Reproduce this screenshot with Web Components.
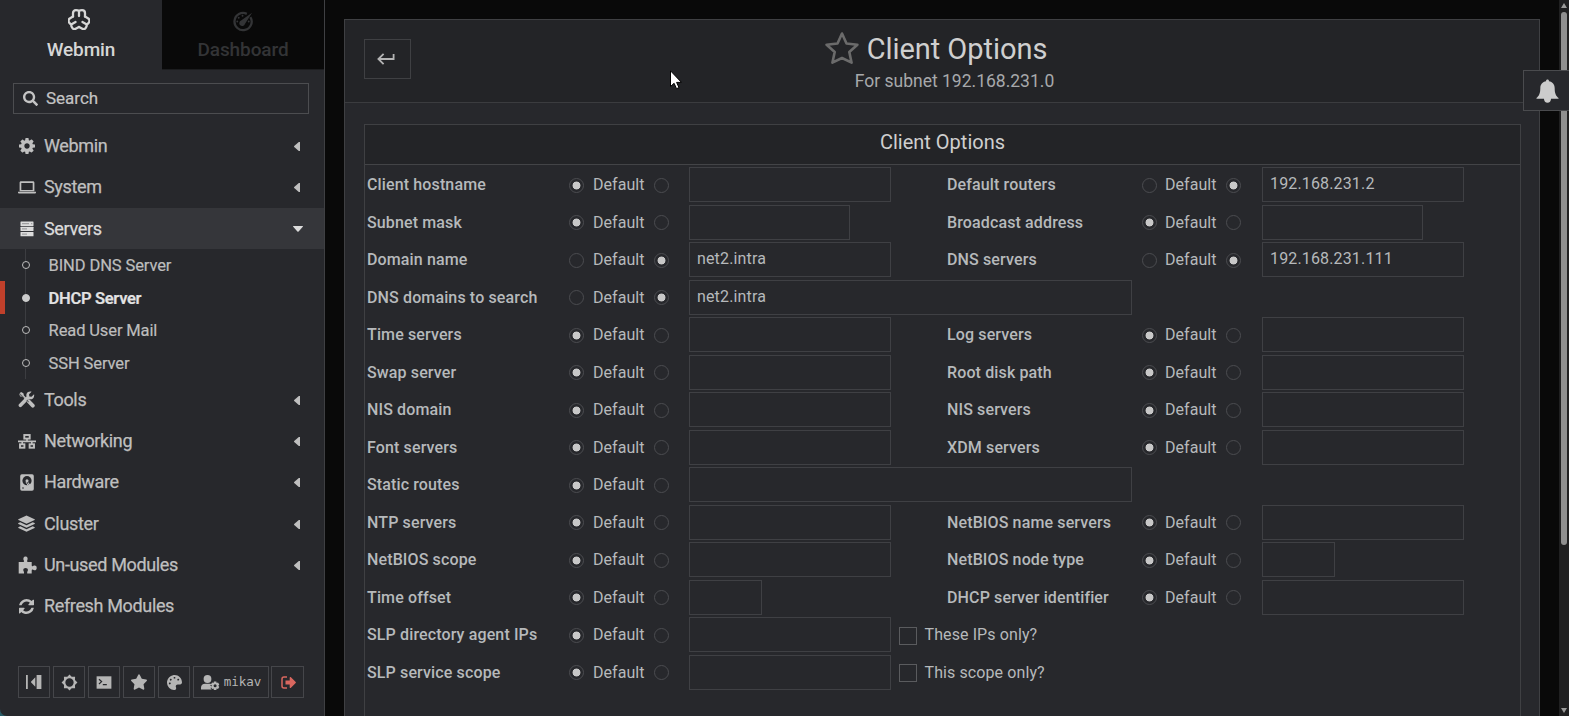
<!DOCTYPE html>
<html lang="en">
<head>
<meta charset="utf-8">
<title>Webmin - DHCP Server - Client Options</title>
<style>
html,body{margin:0;height:100%;overflow:hidden;background:#090909}
</style>
</head>
<body>
<wm-app></wm-app>
<script>
const define = (name, css, html) => customElements.define(name, class extends HTMLElement {
  constructor() {
    super();
    this.attachShadow({ mode: 'open' }).innerHTML =
      `<style>*{box-sizing:border-box}${css}</style>` + (typeof html === 'function' ? html(this) : html);
  }
});

const LOBE = 'M5 7.500V4.200q0-3 3-3 1.800 0 3 .8 1.200-.8 3-.8 3 0 3 3V7.500M11 2.500v4.500';
const ICONS = {
  webmin: ['0 0 22 21', `<g fill="none" stroke="currentColor" stroke-width="2.300" stroke-linejoin="round" stroke-linecap="round"><path d="${LOBE}"/><path transform="rotate(120 11 11)" d="${LOBE}"/><path transform="rotate(240 11 11)" d="${LOBE}"/></g>`],
  dash: ['0 0 22 22', '<path fill="none" stroke="currentColor" stroke-width="2.400" d="M18.700 6.300A9 9 0 1 1 15 3"/><path fill="currentColor" d="M20.500 1.800L13 13.500a3 3 0 1 1-4-3.500z"/><g fill="currentColor"><circle cx="5" cy="11" r="1"/><circle cx="6.500" cy="7" r="1"/><circle cx="10.500" cy="5" r="1"/><circle cx="17" cy="11" r="1"/></g>'],
  search: ['0 0 512 512', '<path fill="currentColor" d="M505 442.700L405.300 343c-4.500-4.500-10.600-7-17-7H372c27.600-35.300 44-79.700 44-128C416 93.100 322.900 0 208 0S0 93.100 0 208s93.100 208 208 208c48.300 0 92.700-16.400 128-44v16.300c0 6.400 2.500 12.500 7 17l99.700 99.700c9.400 9.400 24.600 9.400 33.900 0l28.300-28.300c9.400-9.400 9.400-24.600.1-34zM208 336c-70.700 0-128-57.200-128-128 0-70.700 57.200-128 128-128 70.700 0 128 57.200 128 128 0 70.700-57.200 128-128 128z"/>'],
  cog: ['128 128 1536 1536', '<path fill="currentColor" d="M1152 896q0-106-75-181t-181-75-181 75-75 181 75 181 181 75 181-75 75-181zm512-109v222q0 12-8 23t-20 13l-185 28q-19 54-39 91 35 50 107 138 10 12 10 25t-9 23q-27 37-99 108t-94 71q-12 0-26-9l-138-108q-44 23-91 38-16 136-29 186-7 28-36 28h-222q-14 0-24.500-8.500t-11.500-21.500l-28-184q-49-16-90-37l-141 107q-10 9-25 9-14 0-25-11-126-114-165-168-7-10-7-23 0-12 8-23 15-21 51-66.500t54-70.500q-27-50-41-99l-183-27q-13-2-21-12.500t-8-23.500v-222q0-12 8-23t19-13l186-28q14-46 39-92-40-57-107-138-10-12-10-24 0-10 9-23 26-36 98.500-107.500t94.500-71.500q13 0 26 10l138 107q44-23 91-38 16-136 29-186 7-28 36-28h222q14 0 24.500 8.500t11.500 21.500l28 184q49 16 90 37l142-107q9-9 24-9 13 0 25 10 129 119 165 170 7 8 7 22 0 12-8 23-15 21-51 66.500t-54 70.500q26 50 41 98l183 28q13 2 21 12.500t8 23.500z"/>'],
  laptop: ['0 0 18 13', '<path fill="currentColor" fill-rule="evenodd" d="M3 .3h12c.8 0 1.400.6 1.400 1.400v8.600H1.600V1.700C1.600.9 2.200.3 3 .3zm.3 1.700v7h11.400V2zM0 10.800h18v.6c0 .7-.6 1.200-1.300 1.200H1.300C.6 12.600 0 12.100 0 11.400z"/>'],
  server: ['0 0 14 16', '<g fill="currentColor"><rect x=".5" y=".5" width="13" height="4.400" rx=".5"/><rect x=".5" y="5.700" width="13" height="4.400" rx=".5"/><rect x=".5" y="10.900" width="13" height="4.400" rx=".5"/></g><path stroke="#35363a" stroke-width="1" opacity=".45" d="M2 2.700h7M2 7.900h5M2 13.100h5M11 2.700h1.300"/>'],
  tools: ['0 0 18 18', '<path fill="currentColor" d="M1 3.200L3.200 1l2.500 1.500.6 2.300 1.900 1.900-1.500 1.500-1.900-1.900-2.300-.6zM10.300 9.300l1.900-.3 4.900 5a2 2 0 0 1-2.900 2.900L9.500 12l.3-2zM17 3.400l-2.700 2.700-2.300-.4-.3-2.200L14.400.8c-2-.7-4.500 0-5.300 2.200-.4 1-.3 1.900-.1 2.700L1 14c-1.400 1.500.9 4.200 2.700 2.600l8-8c2.700.9 6.200-1.200 5.300-5.200z"/><path d="M2.300 1L0 0l1 2.300L6.400 7.700M9.300 9.700l2 2" stroke="#27282c" stroke-width="1.200" fill="none" opacity=".6"/>'],
  net: ['0 0 18 15', '<g fill="none" stroke="currentColor" stroke-width="1.900"><rect x="6.300" y="1" width="5.400" height="3.600"/><rect x="2" y="10.300" width="4.400" height="3.400"/><rect x="11.600" y="10.300" width="4.400" height="3.400"/></g><path stroke="currentColor" stroke-width="1.600" d="M0 7.400h18M9 5v2.400M4.200 7.400v3M13.800 7.400v3" fill="none"/>'],
  hdd: ['0 0 14 17', '<rect x=".2" y=".2" width="13.600" height="16.600" rx="1.700" fill="currentColor"/><circle cx="7" cy="6.700" r="4.600" fill="#27282c"/><circle cx="7" cy="6.700" r="1.500" fill="currentColor"/><path d="M7.200 7l1.900 5.600 1.700-1z" fill="currentColor"/><path d="M6 8l3 5" stroke="currentColor"/><circle cx="3" cy="14" r=".8" fill="#27282c"/>'],
  layers: ['0 0 18 18', '<g fill="currentColor"><path d="M9 .4l8.600 4q.5.400 0 .8L9 9.200l-8.600-4q-.5-.4 0-.8z"/><path d="M.4 8.600l2-.9L9 10.900l6.600-3.200 2 .9q.5.400 0 .8L9 13.400.4 9.400q-.5-.4 0-.8z"/><path d="M.4 12.900l2-.9L9 15.200l6.600-3.200 2 .9q.5.400 0 .8L9 17.700.4 13.700q-.5-.4 0-.8z"/></g>'],
  puzzle: ['0 0 19 18', '<path fill="currentColor" d="M.7 6h4.600c1 0 .9-.8.500-1.500C5 3 5.400.6 7.500.6s2.600 2.200 1.800 3.700C8.900 5.200 9 6 10 6h3.700v3.200c0 1 .7 1.200 1.400.8 1.700-1.100 3.600-.3 3.600 1.900s-2 3-3.600 1.900c-.7-.5-1.400-.2-1.400.8V17.400H9.200v-1.200c0-.7.700-1.100.7-2.200 0-1.200-1-1.900-2.300-1.900s-2.300.7-2.300 1.900c0 1.100.7 1.500.7 2.200v1.200H.7z"/>'],
  refresh: ['128 128 1536 1536', '<path fill="currentColor" d="M1639 1056q0 5-1 7-64 268-268 434.500t-478 166.500q-146 0-282.500-55t-243.500-157l-129 129q-19 19-45 19t-45-19-19-45v-448q0-26 19-45t45-19h448q26 0 45 19t19 45-19 45l-137 137q71 66 161 102t187 36q134 0 250-65t186-179q11-17 53-117 8-23 30-23h192q13 0 22.500 9.500t9.500 22.500zm25-800v448q0 26-19 45t-45 19h-448q-26 0-45-19t-19-45 19-45l138-138q-148-137-349-137-134 0-250 65t-186 179q-11 17-53 117-8 23-30 23h-199q-13 0-22.500-9.500t-9.500-22.500v-7q65-268 270-434.500t480-166.500q146 0 284 55.500t245 156.500l130-129q19-19 45-19t45 19 19 45z"/>'],
  left: ['0 0 6 9', '<path fill="currentColor" d="M6 0v9L4.800 9 .2 5q-.4-.5 0-1L4.800 0z"/>'],
  down: ['0 0 10 6', '<path fill="currentColor" d="M.4 0h9.200q.6.200.2.800L5.600 5.400q-.6.500-1.200 0L.2.800Q-.2.200.4 0z"/>'],
  collapse: ['0 0 16 14', '<path fill="currentColor" d="M0 0h1.800v14H0zM10.600 0h4.800v14h-4.800zM9.300 2.300v9.400L5.200 7.600q-.6-.6 0-1.200z"/>'],
  sun: ['0 0 18 18', '<path fill="currentColor" fill-rule="evenodd" d="M9 .4l2.300 2.500 3.600-.1-.1 3.600L17.400 9l-2.600 2.600.1 3.600-3.600-.1L9 17.600l-2.300-2.500-3.600.1.100-3.600L.6 9l2.600-2.600-.1-3.600 3.600.1zM9 4.600a4.400 4.400 0 1 0 0 8.800 4.400 4.400 0 0 0 0-8.800z"/>'],
  term: ['0 0 16 13', '<path fill="currentColor" d="M.6.300h14.800v12.400H.6z"/><path d="M3 3.200l2.600 2.400L3 8M6.800 8.600h4" stroke="#27282c" stroke-width="1.200" fill="none"/>'],
  star: ['20 0 536 512', '<path fill="currentColor" d="M259.300 17.800L194 150.200 47.900 171.500c-26.200 3.800-36.700 36.100-17.700 54.600l105.700 103-25 145.500c-4.500 26.300 23.200 46 46.400 33.700L288 439.600l130.700 68.700c23.200 12.200 50.900-7.400 46.400-33.700l-25-145.500 105.700-103c19-18.500 8.500-50.800-17.700-54.600L382 150.200 316.700 17.800c-11.700-23.600-45.600-23.900-57.400 0z"/>'],
  palette: ['0 0 512 512', '<path fill="currentColor" d="M204.300 5C104.900 24.400 24.800 104.300 5.200 203.400c-37 187 131.700 326.400 258.800 306.700 41.200-6.400 61.400-54.600 42.500-91.700-23.100-45.400 9.900-98.400 60.900-98.400h79.700c35.800 0 64.800-29.600 64.900-65.300C511.500 97.100 368.100-26.900 204.300 5zM96 320c-17.700 0-32-14.300-32-32s14.300-32 32-32 32 14.300 32 32-14.300 32-32 32zm32-128c-17.700 0-32-14.300-32-32s14.300-32 32-32 32 14.300 32 32-14.300 32-32 32zm128-64c-17.700 0-32-14.300-32-32s14.300-32 32-32 32 14.300 32 32-14.300 32-32 32zm128 64c-17.700 0-32-14.300-32-32s14.300-32 32-32 32 14.300 32 32-14.300 32-32 32z"/>'],
  user: ['0 0 19 15', '<g fill="currentColor"><circle cx="6.500" cy="4" r="3.900"/><path d="M0 14.500v-1.800C0 10.400 1.800 8.800 4 8.800h5l1.300.3-1 1.300 1 1.200-.7 1.700 1 1.200zM12.900 6.500h2.400l.4 1.500 1.300-.4 1.300 2-1 1.200 1 1.200-1.300 2-1.300-.4-.4 1.300h-2.400l-.4-1.300-1.400.4-1.200-2 1-1.200-1-1.200 1.200-2 1.400.4z"/></g><circle cx="14.100" cy="10.800" r="1.500" fill="#27282c"/>'],
  logout: ['0 0 16 13', '<path fill="none" stroke="currentColor" stroke-width="1.500" d="M6 1H3Q1 1 1 3v7q0 2 2 2h3"/><path fill="currentColor" d="M4.500 4.500h4.200v-3q.3-.8 1-.4l5 4.900q.5.500 0 1l-5 4.900q-.7.400-1-.4v-3H4.500z"/>'],
  back: ['0 0 18 12', '<path fill="none" stroke="currentColor" stroke-width="1.800" d="M16.600 1v5H1.500M6.600.8L1.400 6l5.200 5.200"/>'],
  outline: ['0 0 34 33', '<path fill="none" stroke="currentColor" stroke-width="2.600" stroke-linejoin="round" d="M17 1.500l4.500 10 10.900 1.200-8.100 7.300 2.300 10.700L17 26l-9.600 4.700 2.300-10.700-8.100-7.300 10.900-1.200z"/>'],
  bell: ['0 0 24 25', '<path fill="currentColor" d="M12 .5c.9 0 1.500.6 1.500 1.500v.3c3.700.6 6 3.300 6 7.200 0 5.500 1.400 8 4 10.200v1H.5v-1c2.600-2.200 4-4.700 4-10.200 0-3.900 2.300-6.600 6-7.200V2c0-.9.600-1.500 1.500-1.500zM8.300 20.500h7.400c0 2.300-1.600 4.300-3.700 4.300s-3.700-2-3.700-4.300z"/>']
};

define('wm-icon', ':host{display:inline-block;flex:none}svg{display:block;width:100%;height:100%}',
  el => { const [vb, g] = ICONS[el.getAttribute('name')]; return `<svg viewBox="${vb}">${g}</svg>`; });

define('wm-tab', `
:host{display:flex;flex-direction:column;align-items:center;flex:1;height:70px;padding-top:8.500px;gap:6px;color:#d6d6d6;font:500 19px/28px Roboto,sans-serif;letter-spacing:-.1px}
:host([off]){background:#090909;color:#333436;border-bottom:1px solid #1c1d1f;padding-top:11px;gap:3.500px}
wm-icon{width:22px;height:21px}
:host(:not([off])) wm-icon{margin-right:4px}`,
  el => `<wm-icon name="${el.getAttribute('icon')}"></wm-icon><slot></slot>`);

define('wm-search', `
:host{display:flex;align-items:center;gap:8px;height:31px;margin:13px 15px 0 13px;border:1px solid #4c4d50;padding-left:9px;box-sizing:border-box;color:#c4c4c4;font:17px/29px Roboto,sans-serif;-webkit-text-stroke:.2px currentColor}
wm-icon{width:15px;height:15px}`,
  '<wm-icon name="search"></wm-icon><slot></slot>');

define('wm-nav', `
:host{display:flex;align-items:center;height:41.250px;padding:0 21px 0 17.500px;box-sizing:border-box;color:#bfbfbf;font:18px/24px Roboto,sans-serif;letter-spacing:-.35px;-webkit-text-stroke:.25px currentColor}
:host([open]){background:#35363a;color:#dcdcdc}
.i{display:grid;place-items:center;width:18px;height:18px;margin-right:8.500px}
.i wm-icon{width:var(--w,17px);height:var(--h,17px)}
span{flex:1}
.a{width:6px;height:9px;margin-top:1px;margin-right:3px}
.d{width:10px;height:6px;margin-top:1px}`,
  el => `<div class="i"><wm-icon name="${el.getAttribute('icon')}"></wm-icon></div><span><slot></slot></span>` +
    (el.hasAttribute('leaf') ? '' : el.hasAttribute('open') ? '<wm-icon class="d" name="down"></wm-icon>' : '<wm-icon class="a" name="left"></wm-icon>'));

define('wm-sub', `
:host{display:flex;align-items:center;height:32.600px;box-sizing:border-box;border-left:5px solid transparent;padding:1.600px 0 0 17px;color:#bdbdbd;font:16.500px/22px Roboto,sans-serif;letter-spacing:-.12px;-webkit-text-stroke:.2px currentColor}
:host([active]){border-left-color:#c0402b;color:#e2e2e2;font-weight:600;letter-spacing:-.3px}
i{width:8px;height:8px;border:1.500px solid #bdbdbd;border-radius:50%;background:#27282c;margin:-2px 18.600px 0 0}
:host([active]) i{background:#ccc;border-color:#ccc}`,
  '<i></i><slot></slot>');

define('wm-tree', `
:host{display:block;height:130.400px;margin-top:-.4px;box-sizing:border-box;background:linear-gradient(#3c3d41,#3c3d41) 25px 0/1px 100% no-repeat}`, '<slot></slot>');

define('wm-tool', `
:host{display:flex;align-items:center;justify-content:center;gap:4px;width:32px;height:32px;box-sizing:border-box;border:1px solid #45464a;color:#b5b5b5;font:12.500px/16px "DejaVu Sans Mono",monospace}
wm-icon{width:var(--w,16px);height:var(--h,16px)}`,
  el => `<wm-icon name="${el.getAttribute('icon')}"></wm-icon><slot></slot>`);

define('wm-sidebar', `
:host{display:flex;flex-direction:column;width:325px;height:716px;background:#27282c;border-right:1px solid #3f4043;box-sizing:border-box;border-bottom-left-radius:7px}
.tabs{display:flex}
nav{margin-top:11.500px}
.tools{display:flex;gap:3px;margin:39.250px 0 0 18px}`, `
<div class="tabs"><wm-tab icon="webmin">Webmin</wm-tab><wm-tab icon="dash" off>Dashboard</wm-tab></div>
<wm-search>Search</wm-search>
<nav>
<wm-nav icon="cog" style="--w:16px;--h:16px">Webmin</wm-nav>
<wm-nav icon="laptop" style="--w:18px;--h:13px">System</wm-nav>
<wm-nav icon="server" open style="--w:14px;--h:16px">Servers</wm-nav>
<wm-tree><wm-sub>BIND DNS Server</wm-sub><wm-sub active>DHCP Server</wm-sub><wm-sub>Read User Mail</wm-sub><wm-sub>SSH Server</wm-sub></wm-tree>
<wm-nav icon="tools">Tools</wm-nav>
<wm-nav icon="net" style="--w:18px;--h:15px">Networking</wm-nav>
<wm-nav icon="hdd" style="--w:14px;--h:17px">Hardware</wm-nav>
<wm-nav icon="layers">Cluster</wm-nav>
<wm-nav icon="puzzle" style="--w:19px;--h:18px">Un-used Modules</wm-nav>
<wm-nav icon="refresh" leaf style="--w:15px;--h:15px">Refresh Modules</wm-nav>
</nav>
<div class="tools">
<wm-tool icon="collapse" style="--h:14px"></wm-tool>
<wm-tool icon="sun" style="--w:17px;--h:17px"></wm-tool>
<wm-tool icon="term" style="--h:13px"></wm-tool>
<wm-tool icon="star"></wm-tool>
<wm-tool icon="palette" style="--w:15px;--h:15px"></wm-tool>
<wm-tool icon="user" style="width:76px;--w:19px;--h:15px">mikav</wm-tool>
<wm-tool icon="logout" style="width:33px;margin-left:-1px;padding-left:2px;color:#d9675f;--h:13px"></wm-tool>
</div>`);

define('wm-radio', `
:host{display:inline-block;flex:none;width:15px;height:15px;box-sizing:border-box;border:1px solid #4b4c50;border-radius:50%}
:host([on]){background:radial-gradient(circle,#c8c8c8 0 3.600px,transparent 4.300px)}`, '');

define('wm-field', `
:host{display:flex;height:35px;box-sizing:border-box;font:16px/35px Roboto,sans-serif;color:#b6b9bb;letter-spacing:.05px}
b{font-weight:500;width:var(--label);letter-spacing:.13px}
.c{display:flex;align-items:center}
wm-radio{margin-top:1.600px}
.c span{margin:0 9px 0 var(--near);width:52px}
.box{width:var(--w,202px);height:35px;border:1px solid #3f4044;margin-left:var(--gap);padding-left:7px;line-height:31px;letter-spacing:.15px}`,
  el => {
    const custom = el.hasAttribute('value');
    return `<b>${el.getAttribute('label')}</b><div class="c"><wm-radio ${custom ? '' : 'on'}></wm-radio><span>Default</span><wm-radio ${custom ? 'on' : ''}></wm-radio><div class="box">${el.getAttribute('value') || ''}</div></div><slot></slot>`;
  });

define('wm-check', `
:host{display:flex;align-items:center;gap:7.500px;margin-left:8px;letter-spacing:.1px}
i{width:18px;height:18px;border:1px solid #5a5b5e;margin-top:2px}`, '<i></i><slot></slot>');

const W = { s: 73, m: 161, n: 202, l: 443 };
const ROWS = [
  [['Client hostname', 'n'], ['Default routers', 'n', '192.168.231.2']],
  [['Subnet mask', 'm'], ['Broadcast address', 'm']],
  [['Domain name', 'n', 'net2.intra'], ['DNS servers', 'n', '192.168.231.111']],
  [['DNS domains to search', 'l', 'net2.intra']],
  [['Time servers', 'n'], ['Log servers', 'n']],
  [['Swap server', 'n'], ['Root disk path', 'n']],
  [['NIS domain', 'n'], ['NIS servers', 'n']],
  [['Font servers', 'n'], ['XDM servers', 'n']],
  [['Static routes', 'l']],
  [['NTP servers', 'n'], ['NetBIOS name servers', 'n']],
  [['NetBIOS scope', 'n'], ['NetBIOS node type', 's']],
  [['Time offset', 's'], ['DHCP server identifier', 'n']],
  [['SLP directory agent IPs', 'n', , 'These IPs only?']],
  [['SLP service scope', 'n', , 'This scope only?']]
];
const field = ([label, w, value, check], i, row) =>
  `<wm-field label="${label}" ${value ? `value="${value}"` : ''} style="--label:${i ? 195 : 202}px;--near:${i ? 8 : 9}px;--gap:${i ? 21 : 20}px;--w:${W[w]}px;${row.length === 1 ? 'grid-column:span 2' : ''}">${check ? `<wm-check>${check}</wm-check>` : ''}</wm-field>`;

define('wm-options', `
:host{display:block;flex:1;margin:21px 18px 0 19px;border:1px solid #3f4043;border-bottom:0}
h2{margin:0;height:40px;box-sizing:border-box;border-bottom:1px solid #434447;background:#232427;text-align:center;font:400 20px/35px Roboto,sans-serif;color:#cfcfcf}
.g{display:grid;grid-template-columns:580px 1fr;grid-auto-rows:37.500px;padding:2px 0 0 2px}`,
  `<h2>Client Options</h2><div class="g">${ROWS.map(r => r.map(field).join('')).join('')}</div>`);

define('wm-header', `
:host{display:grid;grid-template-columns:47px 1fr 70px;height:83px;box-sizing:border-box;background:#232427;border-bottom:1px solid #3b3c3f;padding:19px 0 0 19px;color:#cfcfcf;font-family:Roboto,sans-serif}
.b{display:grid;place-items:center;width:47px;height:40px;border:1px solid #3f4043;color:#b4b4b4}
.b wm-icon{width:18px;height:12px;margin-top:-1px;margin-right:4px}
.t{display:flex;flex-direction:column;align-items:center;margin-top:-10px}
h1{display:flex;align-items:center;gap:8px;margin:0 8px 0 0;font:400 29px/40px Roboto,sans-serif;letter-spacing:-.05px;height:40px}
h1 wm-icon{width:34px;height:33px;margin-top:-1px;color:#6b6b6b}
p{margin:0 0 0 29px;font-size:17.500px;line-height:24px;color:#a7a9ab}`, `
<div class="b"><wm-icon name="back"></wm-icon></div>
<div class="t"><h1><wm-icon name="outline"></wm-icon><span>Client Options</span></h1><p>For subnet 192.168.231.0</p></div>`);

define('wm-panel', `
:host{display:flex;flex-direction:column;width:1196px;height:697px;margin:19px 0 0 19px;box-sizing:border-box;border:1px solid #3f4043;border-bottom:0;background:#27282c}`,
  '<wm-header></wm-header><wm-options></wm-options>');

define('wm-scrollbar', `
:host{display:flex;flex-direction:column;align-items:center;width:10px;height:716px;margin-left:auto;background:#202021}
.u,.d{border:3px solid transparent;width:0;height:0}
.u{border-bottom:5px solid #9a9a9a;border-top:0;margin-top:3px}
.d{border-top:5px solid #9a9a9a;border-bottom:0;margin-top:163px}
.k{width:6px;height:533px;border-radius:3px;background:#8f8f8f;margin-top:4px}`, '<div class="u"></div><div class="k"></div><div class="d"></div>');

define('wm-app', `
:host{display:flex;width:1569px;height:716px;background:linear-gradient(90deg,#285b66 8px,#090909 8px);overflow:hidden;position:relative}
main{flex:1;display:flex;background:#090909}
.bell{position:absolute;left:1523px;top:70px;width:60px;height:41px;border:1px solid #4a4b4e;background:#27282c;color:#ccc;padding:8px 0 0 12px}
.bell wm-icon{width:23px;height:24px}
.cur{position:absolute;left:670px;top:70px;width:12px;height:20px}`, `
<wm-sidebar></wm-sidebar>
<main><wm-panel></wm-panel><wm-scrollbar></wm-scrollbar></main>
<div class="bell"><wm-icon name="bell"></wm-icon></div>
<svg class="cur" viewBox="0 0 12 20"><path d="M.5.8v15.700l3.600-3.200 2.400 5.400 2.500-1.100-2.400-5.200h4.900z" fill="#fff" stroke="#000"/></svg>`);
</script>
</body>
</html>
